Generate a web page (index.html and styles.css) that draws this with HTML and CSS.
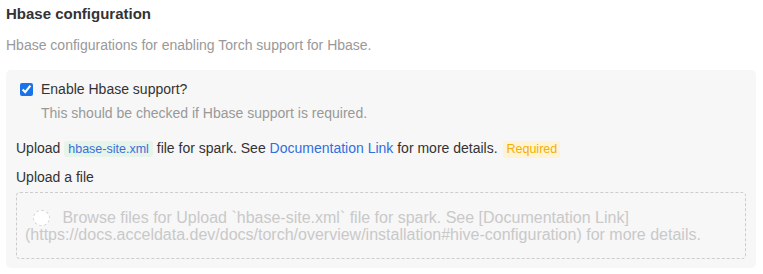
FILE: index.html
```html
<!DOCTYPE html>
<html lang="en">
<head>
<meta charset="utf-8">
<title>Hbase configuration</title>
<link rel="stylesheet" href="styles.css">
</head>
<body>
<div class="page">
  <h2 class="title">Hbase configuration</h2>
  <p class="subtitle">Hbase configurations for enabling Torch support for Hbase.</p>
  <div class="panel">
    <label class="check-row">
      <input type="checkbox" class="check" checked>
      <span class="check-label">Enable Hbase support?</span>
    </label>
    <p class="help">This should be checked if Hbase support is required.</p>
    <p class="upload-line">Upload <code class="code">hbase-site.xml</code> file for spark. See <a class="link" href="#">Documentation Link</a> for more details. <span class="required">Required</span></p>
    <p class="field-label">Upload a file</p>
    <div class="dropzone">
      <p class="drop-text"><span class="spinner"></span> Browse files for Upload `hbase-site.xml` file for spark. See [Documentation Link] (https://docs.acceldata.dev/docs/torch/overview/installation#hive-configuration) for more details.</p>
    </div>
  </div>
</div>
</body>
</html>
```
FILE: styles.css
```css
html, body {
  margin: 0;
  padding: 0;
  background: #ffffff;
}

.page {
  padding: 0 7px 0 6px;
  font-family: "Liberation Sans", Arial, sans-serif;
  color: #333333;
}

.title {
  margin: 0;
  padding-top: 5px;
  font-size: 15px;
  line-height: 18px;
  font-weight: bold;
  color: #333333;
}

.subtitle {
  margin: 12px 0 0;
  font-size: 14px;
  line-height: 20px;
  color: #999999;
}

.panel {
  margin-top: 15px;
  background: #f7f7f7;
  border-radius: 5px;
  padding: 9px 10px 9px 10px;
}

.check-row {
  display: flex;
  align-items: center;
  gap: 8px;
  padding-left: 4px;
  height: 20px;
  font-size: 14px;
  line-height: 20px;
  color: #333333;
}

.check {
  margin: 0;
  width: 13px;
  height: 13px;
  accent-color: #1a73e8;
}

.help {
  margin: 4px 0 0 25px;
  font-size: 14px;
  line-height: 20px;
  color: #999999;
}

.upload-line {
  margin: 15px 0 0;
  font-size: 14px;
  line-height: 20px;
  color: #333333;
}

.code {
  font-family: "Liberation Sans", Arial, sans-serif;
  font-size: 12.5px;
  line-height: 15px;
  color: #3a6fd8;
  background: #e6f4ea;
  border-radius: 3px;
  padding: 1px 4px;
}

.link {
  color: #2f6fdf;
  text-decoration: none;
}

.required {
  display: inline-block;
  margin-left: 2px;
  font-size: 12.5px;
  line-height: 17px;
  padding: 0 3px;
  color: #f2b100;
  background: #fff3d4;
  border-radius: 2px;
}

.field-label {
  margin: 9px 0 0;
  font-size: 14px;
  line-height: 20px;
  color: #333333;
}

.dropzone {
  margin-top: 5px;
  border: 1px dashed #cccccc;
  border-radius: 4px;
  padding: 16px 8px 15px 8px;
}

.drop-text {
  margin: 0;
  font-size: 16px;
  line-height: 17px;
  color: #c9c9c9;
}

.spinner {
  display: inline-block;
  box-sizing: border-box;
  width: 17px;
  height: 16px;
  margin: 0 8px;
  vertical-align: -3px;
  border-radius: 50%;
  background: #ffffff;
  border: 1px dashed #d6d6d6;
}
```
